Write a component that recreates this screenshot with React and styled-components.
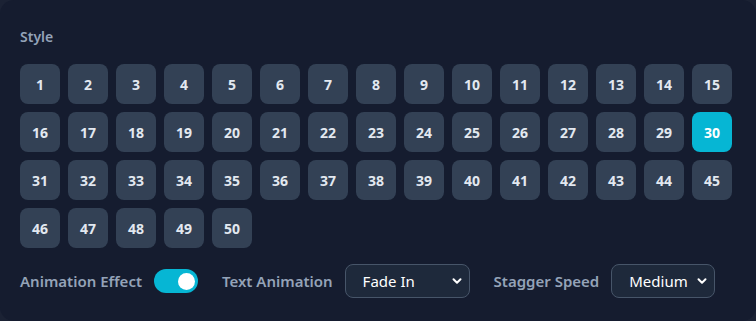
import { useState } from "react";
import styled, { createGlobalStyle } from "styled-components";

const GlobalStyle = createGlobalStyle`
    html, body {
        margin: 0;
        padding: 0;
        background: #1b2234;
    }
    body {
        font-family: "Noto Sans", "Open Sans", sans-serif;
    }
`

const Panel = styled.div`
    width: 756px;
    height: 321px;
    box-sizing: border-box;
    padding: 26px 20px 0 20px;
    background: #151c2f;
    border-radius: 14px;
`

const Label = styled.div`
    font-size: 14px;
    line-height: 22px;
    font-weight: 600;
    color: #94a3b8;
    margin-bottom: 16px;
`

const Grid = styled.div`
    display: grid;
    grid-template-columns: repeat(15, 40px);
    gap: 8px;
`

const StyleButton = styled.button`
    width: 40px;
    height: 40px;
    border: none;
    border-radius: 8px;
    padding: 0;
    font-family: inherit;
    font-size: 14px;
    font-weight: 700;
    color: ${p => (p.$active ? "#ffffff" : "#e2e8f0")};
    background: ${p => (p.$active ? "#06b6d4" : "#334155")};
    cursor: pointer;
`

const Controls = styled.div`
    display: flex;
    align-items: center;
    gap: 24px;
    margin-top: 16px;
    height: 34px;
`

const Field = styled.div`
    display: flex;
    align-items: center;
    gap: 12px;
`

const FieldLabel = styled.span`
    font-size: 15px;
    font-weight: 600;
    color: #94a3b8;
`

const Toggle = styled.div`
    width: 44px;
    height: 24px;
    border-radius: 12px;
    background: ${p => (p.$on ? "#06b6d4" : "#475569")};
    display: flex;
    align-items: center;
    justify-content: ${p => (p.$on ? "flex-end" : "flex-start")};
    padding: 0 3px;
    box-sizing: border-box;
    cursor: pointer;
`

const Knob = styled.div`
    width: 17px;
    height: 17px;
    border-radius: 50%;
    background: #ffffff;
`

const SelectWrap = styled.div`
    position: relative;
    width: ${p => p.$width}px;
    height: 34px;
`

const Select = styled.select`
    appearance: none;
    width: 100%;
    height: 100%;
    box-sizing: border-box;
    padding: 0 24px 0 17px;
    border: 1px solid #475569;
    border-radius: 8px;
    background: #1e293b;
    color: #ffffff;
    font-family: inherit;
    font-size: 15px;
    outline: none;
`

const Chevron = styled.svg`
    position: absolute;
    right: 7px;
    top: 50%;
    transform: translateY(-50%);
    pointer-events: none;
`

function Dropdown({ width, value, options }) {
    return (
        <SelectWrap $width={width}>
            <Select defaultValue={value}>
                {options.map(o => <option key={o}>{o}</option>)}
            </Select>
            <Chevron width="12" height="12" viewBox="0 0 12 12">
                <path d="M2.5 4.2 L6 7.7 L9.5 4.2" fill="none" stroke="#ffffff" strokeWidth="2" strokeLinecap="round" strokeLinejoin="round" />
            </Chevron>
        </SelectWrap>
    );
}

export default function App() {
    const [active, setActive] = useState(30);
    const [on, setOn] = useState(true);
    const styles = Array.from({ length: 50 }, (_, i) => i + 1);

    return (
        <>
            <GlobalStyle />
            <Panel>
                <Label>Style</Label>
                <Grid>
                    {styles.map(n => (
                        <StyleButton key={n} $active={n === active} onClick={() => setActive(n)}>
                            {n}
                        </StyleButton>
                    ))}
                </Grid>
                <Controls>
                    <Field>
                        <FieldLabel>Animation Effect</FieldLabel>
                        <Toggle $on={on} onClick={() => setOn(!on)}>
                            <Knob />
                        </Toggle>
                    </Field>
                    <Field>
                        <FieldLabel>Text Animation</FieldLabel>
                        <Dropdown width={125} value="Fade In" options={["Fade In", "Slide Up", "Zoom", "Typewriter"]} />
                    </Field>
                    <Field>
                        <FieldLabel>Stagger Speed</FieldLabel>
                        <Dropdown width={104} value="Medium" options={["Slow", "Medium", "Fast"]} />
                    </Field>
                </Controls>
            </Panel>
        </>
    );
}
